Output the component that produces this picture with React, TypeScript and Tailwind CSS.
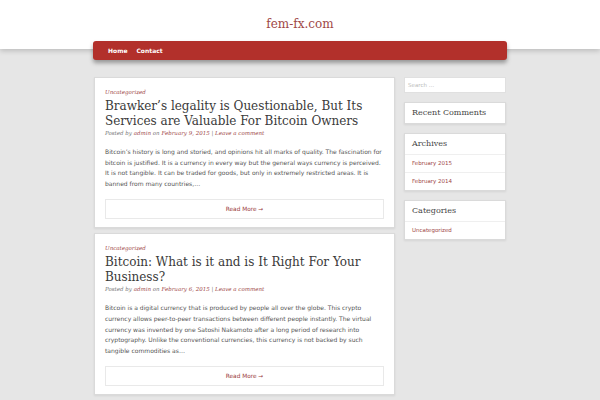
import React from 'react';

interface Post {
  title: string;
  date: string;
  excerpt: string;
}

const posts: Post[] = [
  {
    title: 'Brawker’s legality is Questionable, But Its Services are Valuable For Bitcoin Owners',
    date: 'February 9, 2015',
    excerpt:
      'Bitcoin’s history is long and storied, and opinions hit all marks of quality. The fascination for bitcoin is justified. It is a currency in every way but the general ways currency is perceived. It is not tangible. It can be traded for goods, but only in extremely restricted areas. It is banned from many countries,…',
  },
  {
    title: 'Bitcoin: What is it and is It Right For Your Business?',
    date: 'February 6, 2015',
    excerpt:
      'Bitcoin is a digital currency that is produced by people all over the globe. This crypto currency allows peer-to-peer transactions between different people instantly. The virtual currency was invented by one Satoshi Nakamoto after a long period of research into cryptography. Unlike the conventional currencies, this currency is not backed by such tangible commodities as…',
  },
];

const serif = "font-['DejaVu_Serif',serif]";

const PostCard: React.FC<{ post: Post }> = ({ post }) => (
  <article className="bg-white border border-[#dadada] shadow-[0_1px_2px_rgba(0,0,0,0.08)] px-[10px] pt-[10px] pb-[8px]">
    <div className={`${serif} italic text-[5.5px] leading-[9px] text-[#a04848]`}>Uncategorized</div>
    <h2 className={`${serif} mt-[1.5px] text-[12px] leading-[15px] text-[#3a3a3a]`}>{post.title}</h2>
    <div className={`${serif} italic mt-[0.5px] text-[5.5px] leading-[9px] text-[#777]`}>
      Posted by <span className="text-[#a04848]">admin</span> on{' '}
      <span className="text-[#a04848]">{post.date}</span> |{' '}
      <span className="text-[#a04848]">Leave a comment</span>
    </div>
    <p className="mt-[9px] text-[6.03px] leading-[10.6px] text-[#555]">{post.excerpt}</p>
    <div className="mt-[10px] h-[20px] border border-[#e9e9e9] flex items-center justify-center text-[5.8px] text-[#9a3d3d]">
      Read More →
    </div>
  </article>
);

const Widget: React.FC<{ title: string; items?: string[] }> = ({ title, items = [] }) => (
  <div className="bg-white border border-[#dadada] shadow-[0_1px_2px_rgba(0,0,0,0.08)]">
    <div className={`${serif} h-[20px] flex items-center px-[7px] text-[8px] text-[#444]`}>{title}</div>
    {items.map((item) => (
      <div
        key={item}
        className="h-[18px] flex items-center px-[7px] border-t border-[#efefef] text-[5.5px] text-[#a04848]"
      >
        {item}
      </div>
    ))}
  </div>
);

export default function App() {
  return (
    <div className="min-h-screen bg-[#e6e6e6] font-['DejaVu_Sans',sans-serif] overflow-hidden">
      <header className="relative h-[49px] bg-white shadow-[0_2px_5px_rgba(0,0,0,0.18)] flex justify-center pt-[17px]">
        <a className={`${serif} text-[12px] leading-[15px] text-[#a04848]`}>fem-fx.com</a>
      </header>
      <div className="relative w-[414px] mx-auto -mt-[8px]">
        <nav className="h-[19px] rounded-[3px] bg-[#b2302b] shadow-[0_3px_4px_rgba(0,0,0,0.35)] flex items-center gap-[9px] pl-[15px] text-[6px] font-bold text-white">
          <a>Home</a>
          <a>Contact</a>
        </nav>
        <div className="flex gap-[9px] mt-[17px] px-[1px]">
          <main className="w-[301px] flex flex-col gap-[5px]">
            {posts.map((p) => (
              <PostCard key={p.title} post={p} />
            ))}
          </main>
          <aside className="w-[102px] flex flex-col gap-[9px]">
            <div className="h-[16px] bg-white border border-[#e0e0e0] flex items-center px-[3px] text-[5.5px] text-[#bbb]">
              Search …
            </div>
            <Widget title="Recent Comments" />
            <Widget title="Archives" items={['February 2015', 'February 2014']} />
            <Widget title="Categories" items={['Uncategorized']} />
          </aside>
        </div>
      </div>
    </div>
  );
}
